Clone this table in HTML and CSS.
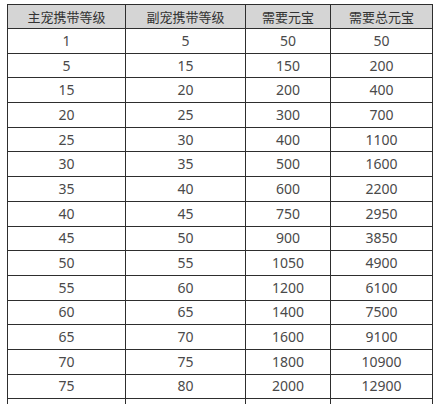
FILE: index.html
```html
<!DOCTYPE html>
<html lang="zh-CN">
<head>
<meta charset="utf-8">
<link rel="stylesheet" href="styles.css">
</head>
<body>
<table class="tbl">
  <colgroup>
    <col class="c1"><col class="c2"><col class="c3"><col class="c4">
  </colgroup>
  <thead>
    <tr><th>主宠携带等级</th><th>副宠携带等级</th><th>需要元宝</th><th>需要总元宝</th></tr>
  </thead>
  <tbody>
    <tr><td>1</td><td>5</td><td>50</td><td>50</td></tr>
    <tr><td>5</td><td>15</td><td>150</td><td>200</td></tr>
    <tr><td>15</td><td>20</td><td>200</td><td>400</td></tr>
    <tr><td>20</td><td>25</td><td>300</td><td>700</td></tr>
    <tr><td>25</td><td>30</td><td>400</td><td>1100</td></tr>
    <tr><td>30</td><td>35</td><td>500</td><td>1600</td></tr>
    <tr><td>35</td><td>40</td><td>600</td><td>2200</td></tr>
    <tr><td>40</td><td>45</td><td>750</td><td>2950</td></tr>
    <tr><td>45</td><td>50</td><td>900</td><td>3850</td></tr>
    <tr><td>50</td><td>55</td><td>1050</td><td>4900</td></tr>
    <tr><td>55</td><td>60</td><td>1200</td><td>6100</td></tr>
    <tr><td>60</td><td>65</td><td>1400</td><td>7500</td></tr>
    <tr><td>65</td><td>70</td><td>1600</td><td>9100</td></tr>
    <tr><td>70</td><td>75</td><td>1800</td><td>10900</td></tr>
    <tr><td>75</td><td>80</td><td>2000</td><td>12900</td></tr>
    <tr><td>80</td><td>85</td><td>2200</td><td>15100</td></tr>
  </tbody>
</table>
</body>
</html>
```

FILE: styles.css
```css
html, body {
  background: #fff;
}
body {
  margin: 4px 0 0 7px;
  font-family: "Noto Sans", "Noto Sans CJK SC", sans-serif;
  font-size: 14px;
  color: #444;
}
.tbl {
  border-collapse: collapse;
  table-layout: fixed;
  width: 425px;
}
.c1 { width: 118px; }
.c2 { width: 120px; }
.c3 { width: 85px; }
.c4 { width: 102px; }
.tbl th,
.tbl td {
  border: 1px solid #2e2e2e;
  padding: 0;
  text-align: center;
  height: 23.7px;
  line-height: 16px;
  white-space: nowrap;
}
.tbl th {
  background: #d5d5d5;
  color: #333;
  font-weight: normal;
  font-size: 13px;
  height: 23px;
}
.tbl td {
  color: #4a4a4a;
}
```
